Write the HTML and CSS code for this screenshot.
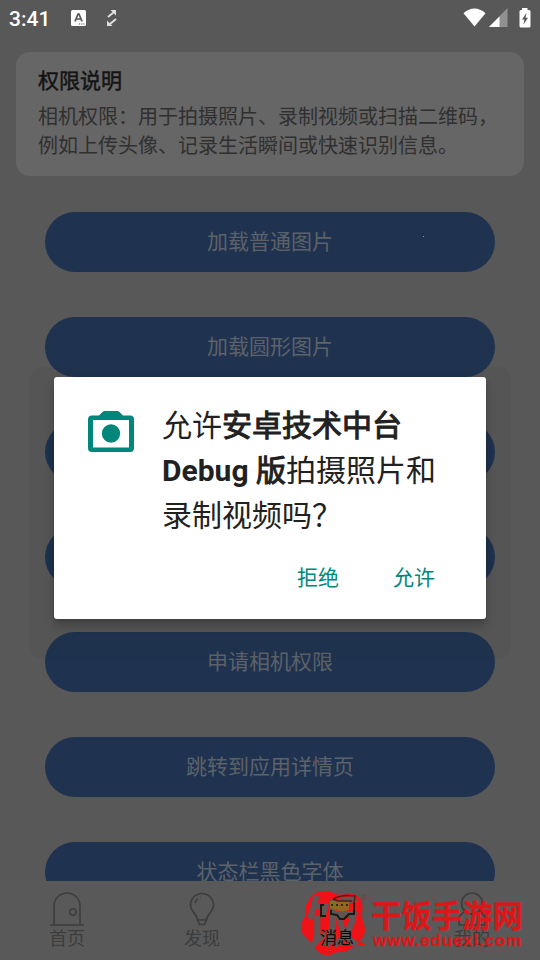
FILE: index.html
```html
<!DOCTYPE html>
<html lang="zh-CN">
<head>
<meta charset="utf-8">
<title>权限说明</title>
<link rel="stylesheet" href="styles.css">
</head>
<body>
<div class="screen">
  <header class="status">
    <span class="time">3:41</span>
    <svg class="app-icon" width="15" height="16" viewBox="0 0 15 16"><rect width="15" height="16" rx="1.500" fill="#fff"/><path d="M4 11.500 7 4h1l3 7.500M5.200 9h4.600" fill="none" stroke="#555" stroke-width="1.700"/><path d="M8 14h1.200m1 0h1.200m1 0h1.200" stroke="#555" stroke-width="1.200"/></svg>
    <svg class="sync-icon" width="12" height="18" viewBox="0 0 12 18"><path d="M2 8 8 3M10 10l-6 5" fill="none" stroke="#ddd" stroke-width="2"/><path d="M4.500 1H10v5.500zM1 11.500V17h5.500z" fill="#ddd"/></svg>
    <span class="spacer"></span>
    <svg class="wifi" width="23" height="19" viewBox="0 0 23 19"><path d="M.5 5.200Q11.500-4 22.500 5.200L11.500 18.500z" fill="#fff"/></svg>
    <svg class="signal" width="19" height="19" viewBox="0 0 19 19"><path d="M0 19 18.500 0v19z" fill="#919191"/><path d="M0 19 10.500 8.500V19z" fill="#fff"/></svg>
    <svg class="battery" width="12" height="20" viewBox="0 0 12 20"><path d="M3 0h5.500v2H10q1.500 0 1.500 1.500V18q0 1.500-1.500 1.500H2Q.5 19.500.5 18V3.500Q.5 2 2 2h1z" fill="#fff"/><path d="M7.500 5 3 11.500h2.400L4.500 16.500 9 9.800H6.500z" fill="#555"/></svg>
  </header>
  <section class="notice">
    <h1>权限说明</h1>
    <p>相机权限：用于拍摄照片、录制视频或扫描二维码，<br>例如上传头像、记录生活瞬间或快速识别信息。</p>
  </section>
  <main class="actions">
    <div class="btn">加载普通图片</div>
    <div class="btn">加载圆形图片</div>
    <div class="btn"></div>
    <div class="btn"></div>
    <div class="btn">申请相机权限</div>
    <div class="btn">跳转到应用详情页</div>
    <div class="btn">状态栏黑色字体</div>
  </main>
  <nav class="tabs">
    <div class="tab"><svg width="34" height="36" viewBox="0 0 34 36"><path d="M4 33.500V15a13 13 0 0 1 26 0v18.500M0 34h34"/><circle cx="23" cy="21" r="3.200"/></svg><span>首页</span></div>
    <div class="tab"><svg width="34" height="36" viewBox="0 0 34 36"><path d="M12.500 29C12.500 23 5.500 21 5.500 14a11.500 11.500 0 0 1 23 0C28.500 21 21.500 23 21.500 29zM12.500 29l2 4.500h5l2-4.500M10 12q1-3 3-4M15 6.500h.5"/></svg><span>发现</span></div>
    <div class="tab"></div>
    <div class="tab"><svg width="34" height="36" viewBox="0 0 34 36"><circle cx="17" cy="12.500" r="10.500"/><path d="M9.500 20 4 26v8h26v-8l-5.500-6"/></svg><span>我的</span></div>
  </nav>
</div>
<div class="dialog-layer">
  <section class="dialog">
    <div class="dialog-body">
      <svg class="camera" width="46" height="41" viewBox="0 0 46 41"><path fill="#00867b" fill-rule="evenodd" d="M16.500 0h13q1 0 2 1l3.500 3.500h7q4 0 4 4V37q0 4-4 4H4q-4 0-4-4V8.500q0-4 4-4h7L14.500 1q1-1 2-1zM5 9v27.500h36V9z"/><circle cx="23" cy="22.500" r="9.200" fill="#00867b"/></svg>
      <p>允许<b>安卓技术中台<br><span class="latin">Debug</span> 版</b>拍摄照片和<br>录制视频吗？</p>
    </div>
    <div class="dialog-actions"><span>拒绝</span><span>允许</span></div>
  </section>
</div>
<aside class="brand">
  <div class="brand-logo">
    <svg width="68" height="66" viewBox="0 0 68 66"><path fill="#f01216" d="M9 10C12 2 25-2 35 4c7 2 10-1 18 0 8 2 11 10 9 19-1 6 3 11 3 17 0 5-3 8-5 11l7 5-12-1C47 64 40 61 34 63 25 69 17 62 13 55 9 49 1 46 1 38c0-9 6-11 5-17-1-5 1-7 3-11z"/></svg>
    <span class="brand-glyph">饭</span>
    <svg class="bubble" width="46" height="28" viewBox="0 0 46 28"><path d="M10 7h19v9q-9 3-19-2z" fill="#8d6b1d"/><path d="M4 11H1v11h5M11 16v4l6 1 3 4h4l5-5h5V9" fill="none" stroke="#1c1714" stroke-width="2"/><path d="M13 5q9-5 22-3l-1 7M13 5l5 2h14" fill="none" stroke="#5a1817" stroke-width="1.500"/><path d="M11 11h17" stroke="#302714" stroke-width="2" stroke-dasharray="2 3"/></svg>
    <span class="brand-mark">®</span>
    <span class="brand-message">消息</span>
  </div>
  <div class="brand-copy"><strong>干饭手游网</strong><span>www.eduexl.com</span></div>
</aside>
</body>
</html>
```
FILE: styles.css
```css
* { box-sizing: border-box; }
body { margin: 0; width: 540px; height: 960px; overflow: hidden; position: relative; background: #585858; font-family: Roboto, "Noto Sans CJK SC", sans-serif; }
h1, p { margin: 0; }
svg { display: block; flex: none; }
.screen { height: 960px; display: flex; flex-direction: column; }
.status { height: 52px; flex: none; display: flex; align-items: flex-start; padding: 8px 9px 0 9px; color: #fff; }
.time { width: 61px; font-size: 21px; line-height: 22px; font-weight: 500; letter-spacing: 0; }
.app-icon { margin: 2px 20px 0 1px; }
.sync-icon { margin-top: 1px; }
.spacer { flex: 1; }
.signal { margin: 0 11px 0 3px; }
.notice { margin: 0 16px; height: 124px; flex: none; padding: 14px 22px; background: #666; border-radius: 14px; color: #303030; }
.notice h1 { font-size: 21px; line-height: 30px; font-weight: 400; color: #141414; -webkit-text-stroke: .5px #141414; }
.notice p { margin-top: 7px; font-size: 20px; line-height: 29px; white-space: nowrap; }
.actions { height: 705px; flex: none; overflow: hidden; padding: 36px 45px 0; display: flex; flex-direction: column; gap: 45px; }
.btn { height: 60px; flex: none; border-radius: 30px; background: #1f3350; color: #5d6269; font-size: 21px; line-height: 61px; text-align: center; }
.btn:first-child { background: radial-gradient(circle at 378.5px 24.5px, #8b93a0 .6px, transparent 1px) #1f3350; }
.tabs { height: 79px; flex: none; display: grid; grid-template-columns: repeat(4, 1fr); background: #595959; }
.tab { display: flex; flex-direction: column; align-items: center; padding: 10px 1px 0 0; color: #3d3d3d; font-size: 18px; line-height: 24px; }
.tab svg { fill: none; stroke: #3d3d3d; stroke-width: 1.6; }
.dialog-layer { position: absolute; top: 367px; left: 30px; width: 481px; height: 292px; padding: 10px 25px 40px 24px; background: #00000008; border-radius: 12px; }
.dialog { width: 432px; height: 242px; background: #fff; border-radius: 3px; color: #212121; box-shadow: 0 8px 10px #0000002b, 0 2px 5px #0002; }
.dialog-body { display: flex; gap: 28px; padding: 26px 34px 0; }
.camera { margin-top: 8px; }
.dialog-body p { font-size: 30px; line-height: 45px; white-space: nowrap; }
.dialog-body b { font-weight: 400; -webkit-text-stroke: 1px #212121; }
.dialog-body .latin { font-weight: 700; -webkit-text-stroke: 0; }
.dialog-actions { display: flex; justify-content: flex-end; gap: 54px; padding: 25px 51px 0 0; font-size: 21px; line-height: 30px; color: #00867b; }
.brand { position: absolute; left: 300px; top: 890px; display: flex; color: #dc171a; }
.brand-logo { position: relative; width: 71px; height: 68px; }
.brand-glyph { position: absolute; left: 6px; top: 6px; font-size: 55px; line-height: 54px; font-weight: 700; color: #625555; }
.bubble { position: absolute; left: 20px; top: 4px; }
.brand-mark { position: absolute; left: 61px; top: 3px; font-size: 8px; line-height: 9px; color: #8d3335; }
.brand-message { position: absolute; left: 20px; top: 37px; font-size: 17px; line-height: 22px; color: #080808; white-space: nowrap; }
.brand-copy { display: flex; flex-direction: column; }
.brand-copy strong { font-size: 30.4px; line-height: 40px; padding-top: 7px; height: 41px; -webkit-text-stroke: .3px #dc171a; }
.brand-copy span { font-family: "Liberation Sans", sans-serif; font-size: 17px; line-height: 20px; font-weight: 700; letter-spacing: .85px; padding-left: 2px; -webkit-text-stroke: .3px #dc171a; }
```
